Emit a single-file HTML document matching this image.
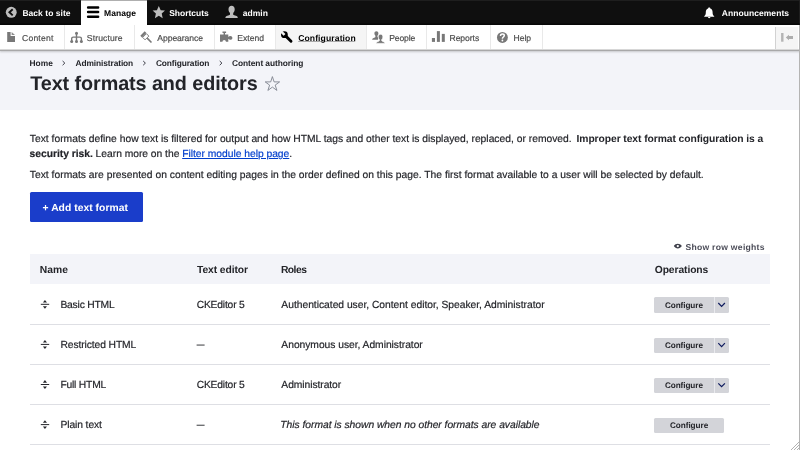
<!DOCTYPE html>
<html><head><meta charset="utf-8">
<style>
*{box-sizing:border-box;margin:0;padding:0}
html,body{width:800px;height:450px;overflow:hidden;background:#fff;font-family:"Liberation Sans",sans-serif;color:#232429;text-rendering:geometricPrecision}
body{position:relative;will-change:transform;transform:translateZ(0)}
.abs{position:absolute;white-space:nowrap;line-height:12px}
.sep{top:25px;width:1px;height:24px;background:#e9e9e9}
.row{left:30px;width:740px;height:1px;background:#dedfe4}
.cfg{background:#d3d4d9;border-radius:1.5px}
svg{position:absolute;overflow:visible}
</style></head><body>
<!-- toolbar bar -->
<div class="abs" style="left:0;top:0;width:800px;height:24.5px;background:#0f0f0f"></div>
<div class="abs" style="left:81px;top:0;width:66px;height:25px;background:#fff"></div>
<!-- tray -->
<div class="abs" style="left:0;top:25px;width:800px;height:25px;background:#fff;border-bottom:1px solid #dadada"></div>
<div class="abs" style="left:0;top:50px;width:800px;height:1px;background:#a8a8a9;box-shadow:0 1px 2px rgba(0,0,0,.27)"></div>
<div class="abs" style="left:275.5px;top:25px;width:91px;height:24px;background:#f5f5f5"></div>
<div class="abs sep" style="left:64px"></div>
<div class="abs sep" style="left:134px"></div>
<div class="abs sep" style="left:214px"></div>
<div class="abs sep" style="left:275px"></div>
<div class="abs sep" style="left:366px"></div>
<div class="abs sep" style="left:426px"></div>
<div class="abs sep" style="left:490px"></div>
<div class="abs sep" style="left:542px"></div>
<div class="abs" style="left:775px;top:26.5px;width:23px;height:22.5px;background:#f5f5f5;border-left:1px solid #d2d2d2"></div>
<!-- header -->
<div class="abs" style="left:0;top:50.5px;width:800px;height:59.9px;background:#f3f4f9;z-index:-1"></div>
<!-- button -->
<div class="abs" style="left:29.6px;top:192px;width:113px;height:29.6px;background:#1a3dca;border-radius:1.5px"></div>
<!-- table -->
<div class="abs" style="left:29.9px;top:254.2px;width:739.8px;height:29.8px;background:#f3f4f9"></div>
<div class="abs row" style="top:324px"></div>
<div class="abs row" style="top:364px"></div>
<div class="abs row" style="top:404px"></div>
<div class="abs row" style="top:444px"></div>
<div class="abs cfg" style="left:654.25px;top:297.4px;width:75px;height:15.3px"></div>
<div class="abs cfg" style="left:654.25px;top:337.55px;width:75px;height:15.3px"></div>
<div class="abs cfg" style="left:654.25px;top:377.7px;width:75px;height:15.3px"></div>
<div class="abs cfg" style="left:654.25px;top:417.8px;width:69.25px;height:15.3px"></div>
<div class="abs" style="left:714px;top:297.4px;width:1px;height:15.3px;background:#e9eaee"></div>
<div class="abs" style="left:714px;top:337.55px;width:1px;height:15.3px;background:#e9eaee"></div>
<div class="abs" style="left:714px;top:377.7px;width:1px;height:15.3px;background:#e9eaee"></div>
<!-- right edge -->
<div class="abs" style="left:799px;top:25px;width:1px;height:425px;background:#b4b4b4"></div>
<div class="abs" style="left:799px;top:0;width:1px;height:24.5px;background:#1e1e1e"></div>
<div class="abs" style="left:22.43px;top:7px;font-size:8.5px;font-weight:bold;color:#fff;letter-spacing:0.032px;">Back to site</div>
<div class="abs" style="left:104.03px;top:7px;font-size:8.5px;font-weight:bold;color:#000;letter-spacing:0.071px;">Manage</div>
<div class="abs" style="left:169.22px;top:7px;font-size:8.5px;font-weight:bold;color:#fff;letter-spacing:-0.019px;">Shortcuts</div>
<div class="abs" style="left:242.64px;top:7px;font-size:8.5px;font-weight:bold;color:#fff;letter-spacing:0.061px;">admin</div>
<div class="abs" style="left:721.78px;top:7px;font-size:8.5px;font-weight:bold;color:#fff;letter-spacing:0.054px;">Announcements</div>
<div class="abs" style="left:22.01px;top:32px;font-size:8.6px;font-weight:normal;color:#4d4d4d;letter-spacing:0.197px;-webkit-text-stroke:0.18px;">Content</div>
<div class="abs" style="left:86.87px;top:32px;font-size:8.6px;font-weight:normal;color:#4d4d4d;letter-spacing:0.107px;-webkit-text-stroke:0.18px;">Structure</div>
<div class="abs" style="left:157.34px;top:32px;font-size:8.6px;font-weight:normal;color:#4d4d4d;letter-spacing:-0.081px;-webkit-text-stroke:0.18px;">Appearance</div>
<div class="abs" style="left:237.29px;top:32px;font-size:8.6px;font-weight:normal;color:#4d4d4d;letter-spacing:-0.013px;-webkit-text-stroke:0.18px;">Extend</div>
<div class="abs" style="left:298.15px;top:32px;font-size:8.6px;font-weight:bold;color:#000;letter-spacing:0.103px;text-shadow:0 0 1.5px #fff,0 0 1px #fff;">Configuration</div>
<div class="abs" style="left:389.29px;top:32px;font-size:8.6px;font-weight:normal;color:#4d4d4d;letter-spacing:-0.158px;-webkit-text-stroke:0.18px;">People</div>
<div class="abs" style="left:449.49px;top:32px;font-size:8.6px;font-weight:normal;color:#4d4d4d;letter-spacing:-0.061px;-webkit-text-stroke:0.18px;">Reports</div>
<div class="abs" style="left:513.49px;top:32px;font-size:8.6px;font-weight:normal;color:#4d4d4d;letter-spacing:-0.031px;-webkit-text-stroke:0.18px;">Help</div>
<div class="abs" style="left:29.58px;top:57px;font-size:8.4px;font-weight:bold;color:#232429;letter-spacing:-0.013px;">Home</div>
<div class="abs" style="left:75.60px;top:57px;font-size:8.4px;font-weight:bold;color:#232429;letter-spacing:-0.113px;">Administration</div>
<div class="abs" style="left:155.91px;top:57px;font-size:8.4px;font-weight:bold;color:#232429;letter-spacing:-0.116px;">Configuration</div>
<div class="abs" style="left:231.96px;top:57px;font-size:8.4px;font-weight:bold;color:#232429;letter-spacing:-0.068px;">Content authoring</div>
<div class="abs" style="left:30.21px;top:78px;font-size:19.8px;font-weight:bold;color:#232429;letter-spacing:-0.079px;">Text formats and editors</div>
<div class="abs" style="left:29.81px;top:134px;font-size:10.3px;font-weight:normal;color:#232429;letter-spacing:0.002px;-webkit-text-stroke:0.18px;">Text formats define how text is filtered for output and how HTML tags and other text is displayed, replaced, or removed.</div>
<div class="abs" style="left:576.51px;top:134px;font-size:10.3px;font-weight:bold;color:#232429;letter-spacing:-0.070px;">Improper text format configuration is a</div>
<div class="abs" style="left:29.58px;top:149px;font-size:10.3px;font-weight:normal;color:#232429;letter-spacing:-0.024px;-webkit-text-stroke:0.18px;"><b>security risk.</b> Learn more on the <span style="color:#003ecc;text-decoration:underline;text-decoration-thickness:0.7px;text-underline-offset:1px">Filter module help page</span>.</div>
<div class="abs" style="left:29.81px;top:170px;font-size:10.3px;font-weight:normal;color:#232429;letter-spacing:0.010px;-webkit-text-stroke:0.18px;">Text formats are presented on content editing pages in the order defined on this page. The first format available to a user will be selected by default.</div>
<div class="abs" style="left:42.55px;top:203px;font-size:10.3px;font-weight:bold;color:#fff;letter-spacing:0.047px;">+ Add text format</div>
<div class="abs" style="left:685.40px;top:241px;font-size:8.6px;font-weight:bold;color:#4b4c58;letter-spacing:0.279px;">Show row weights</div>
<div class="abs" style="left:39.81px;top:265px;font-size:10.3px;font-weight:bold;color:#232429;letter-spacing:0.064px;">Name</div>
<div class="abs" style="left:197.07px;top:265px;font-size:10.3px;font-weight:bold;color:#232429;letter-spacing:-0.101px;">Text editor</div>
<div class="abs" style="left:280.91px;top:265px;font-size:10.3px;font-weight:bold;color:#232429;letter-spacing:-0.511px;">Roles</div>
<div class="abs" style="left:654.73px;top:265px;font-size:10.3px;font-weight:bold;color:#232429;letter-spacing:-0.086px;">Operations</div>
<div class="abs" style="left:60.41px;top:300px;font-size:10.3px;font-weight:normal;color:#232429;letter-spacing:-0.199px;-webkit-text-stroke:0.18px;">Basic HTML</div>
<div class="abs" style="left:60.41px;top:340px;font-size:10.3px;font-weight:normal;color:#232429;letter-spacing:-0.096px;-webkit-text-stroke:0.18px;">Restricted HTML</div>
<div class="abs" style="left:60.41px;top:380px;font-size:10.3px;font-weight:normal;color:#232429;letter-spacing:-0.201px;-webkit-text-stroke:0.18px;">Full HTML</div>
<div class="abs" style="left:60.41px;top:420px;font-size:10.3px;font-weight:normal;color:#232429;letter-spacing:-0.091px;-webkit-text-stroke:0.18px;">Plain text</div>
<div class="abs" style="left:196.65px;top:300px;font-size:10.3px;font-weight:normal;color:#232429;letter-spacing:-0.184px;-webkit-text-stroke:0.18px;">CKEditor 5</div>
<div class="abs" style="left:196.65px;top:380px;font-size:10.3px;font-weight:normal;color:#232429;letter-spacing:-0.184px;-webkit-text-stroke:0.18px;">CKEditor 5</div>
<div class="abs" style="left:281.36px;top:300px;font-size:10.3px;font-weight:normal;color:#232429;letter-spacing:-0.021px;-webkit-text-stroke:0.18px;">Authenticated user, Content editor, Speaker, Administrator</div>
<div class="abs" style="left:281.36px;top:340px;font-size:10.3px;font-weight:normal;color:#232429;letter-spacing:-0.039px;-webkit-text-stroke:0.18px;">Anonymous user, Administrator</div>
<div class="abs" style="left:281.36px;top:380px;font-size:10.3px;font-weight:normal;color:#232429;letter-spacing:-0.069px;-webkit-text-stroke:0.18px;">Administrator</div>
<div class="abs" style="left:280.32px;top:420px;font-size:10.3px;font-weight:normal;color:#232429;letter-spacing:-0.032px;font-style:italic;-webkit-text-stroke:0.18px;">This format is shown when no other formats are available</div>
<div class="abs" style="left:664.96px;top:300px;font-size:8.2px;font-weight:bold;color:#232429;letter-spacing:-0.084px;">Configure</div>
<div class="abs" style="left:664.96px;top:340px;font-size:8.2px;font-weight:bold;color:#232429;letter-spacing:-0.084px;">Configure</div>
<div class="abs" style="left:664.96px;top:380px;font-size:8.2px;font-weight:bold;color:#232429;letter-spacing:-0.084px;">Configure</div>
<div class="abs" style="left:669.91px;top:420px;font-size:8.2px;font-weight:bold;color:#232429;letter-spacing:-0.041px;">Configure</div>
<svg width="800" height="450" viewBox="0 0 800 450" style="left:0;top:0">
<!-- top 1px lighter strip -->
<rect x="0" y="0" width="800" height="0.8" fill="#222"/>
<rect x="81" y="0" width="66" height="0.8" fill="#c8c8c8"/>
<rect x="0" y="23.7" width="81" height="0.8" fill="#000"/>
<rect x="147" y="23.7" width="653" height="0.8" fill="#000"/>
<!-- back to site -->
<circle cx="11.25" cy="12.3" r="5.45" fill="#bebebe"/>
<path d="M12.7 9.2 L9.4 12.3 L12.7 15.4" fill="none" stroke="#0f0f0f" stroke-width="1.9" stroke-linejoin="miter"/>
<!-- hamburger -->
<g stroke="#000" stroke-width="2.5" stroke-linecap="round"><path d="M88.1 7.4H98.1M88.1 12.1H98.1M88.1 16.8H98.1"/></g>
<!-- star -->
<path id="st" fill="#bebebe" d="M158.8 5.9 L160.7 10.3 L165.0 10.6 L161.7 13.6 L162.7 18.2 L158.8 15.8 L154.9 18.2 L155.9 13.6 L152.6 10.6 L156.9 10.3 Z"/>
<!-- user -->
<path fill="#bebebe" d="M231.6 5.8 C233.5 5.8 234.7 7.3 234.7 9.3 C234.7 11 234 12.3 233.2 13 L233.2 14.2 C233.2 14.8 233.6 15 234.3 15.2 L236.6 16 C237.4 16.3 237.7 16.9 237.7 17.6 V18.1 H225.4 V17.6 C225.4 16.9 225.8 16.3 226.6 16 L228.9 15.2 C229.6 15 230 14.8 230 14.2 L230 13 C229.2 12.3 228.5 11 228.5 9.3 C228.5 7.3 229.7 5.8 231.6 5.8 Z"/>
<!-- bell -->
<path fill="#fff" d="M709.2 7.5 C710 7.5 710.3 8 710.3 8.6 C712 9.2 712.6 10.7 712.6 12.4 C712.6 14.2 713 15.2 714.2 16.2 V16.7 H704.2 V16.2 C705.4 15.2 705.8 14.2 705.8 12.4 C705.8 10.7 706.4 9.2 708.1 8.6 C708.1 8 708.4 7.5 709.2 7.5 Z M708 17.1 H710.4 C710.4 17.8 709.9 18.2 709.2 18.2 C708.5 18.2 708 17.8 708 17.1 Z"/>
<!-- content -->
<path fill="#787878" d="M7.2 31.9 H10.6 V36 H15 V41.9 H7.2 Z"/>
<path fill="#8c8c8c" d="M11.6 32.1 L15 35.1 H11.6 Z"/>
<!-- structure -->
<g fill="#787878" stroke="none"><circle cx="76.5" cy="33.2" r="1.5"/><circle cx="71.7" cy="41.5" r="1.5"/><circle cx="76.5" cy="41.5" r="1.5"/><circle cx="81.4" cy="41.5" r="1.5"/></g>
<path fill="none" stroke="#787878" stroke-width="1.4" d="M76.5 33.2 V41.5 M71.7 41.5 V38.6 Q71.7 37.1 73.2 37.1 H79.9 Q81.4 37.1 81.4 38.6 V41.5"/>
<!-- appearance -->
<g transform="translate(142.5,33.5) rotate(45)"><rect x="0" y="-3.1" width="2.4" height="6.2" fill="#787878"/><rect x="2.9" y="-2.65" width="3.4" height="5.3" fill="#fff" stroke="#787878" stroke-width="0.9"/><path d="M6.6 0 H12.7" stroke="#787878" stroke-width="1.6"/></g>
<!-- extend -->
<path fill="#787878" d="M220 34.4 H223.6 V33 H222.5 V31.4 H226.1 V33 H225 V34.4 H228.3 V37 C228.8 36.4 229.5 36 230.4 36 C231.5 36 232.4 36.8 232.4 37.9 C232.4 39 231.5 39.8 230.4 39.8 C229.5 39.8 228.8 39.4 228.3 38.8 V41.8 H225.9 C225.9 40.6 225.2 39.9 224.2 39.9 C223.2 39.9 222.5 40.6 222.5 41.8 H220 Z"/>
<!-- wrench -->
<path d="M285.6 35.9 L291 41.2" stroke="#000" stroke-width="2.9" stroke-linecap="round"/>
<circle cx="284.4" cy="34.7" r="3.4" fill="#000"/>
<g transform="translate(284.4,34.7) rotate(-135)"><rect x="-0.2" y="-1.25" width="5" height="2.5" fill="#f5f5f5"/></g>
<rect x="298.2" y="41.15" width="57" height="0.65" fill="#000" opacity="0.48"/>
<!-- people -->
<path fill="#787878" d="M376.4 31.3 C377.6 31.3 378.4 32.2 378.4 33.4 C378.4 34.4 378 35.2 377.4 35.7 V36.6 L378 37 V39.8 H372.2 V39.4 C372.2 38.8 372.5 38.5 373.1 38.2 L374.8 37.5 C375.2 37.3 375.4 37.1 375.4 36.7 V35.7 C374.8 35.2 374.4 34.4 374.4 33.4 C374.4 32.2 375.2 31.3 376.4 31.3 Z"/>
<path fill="#787878" stroke="#fff" stroke-width="0.7" d="M380.6 34.3 C382 34.3 382.9 35.4 382.9 36.9 C382.9 38.1 382.4 39 381.7 39.6 V40.5 C381.7 40.9 382 41.1 382.5 41.3 L384 41.9 C384.5 42.1 384.8 42.5 384.8 43 V43.4 H376.2 V43 C376.2 42.5 376.5 42.1 377 41.9 L378.6 41.3 C379.1 41.1 379.4 40.9 379.4 40.5 V39.6 C378.7 39 378.2 38.1 378.2 36.9 C378.2 35.4 379.2 34.3 380.6 34.3 Z"/>
<!-- reports -->
<g fill="#787878"><rect x="431.9" y="38" width="3.1" height="3.9"/><rect x="436.9" y="31.1" width="3" height="10.8"/><rect x="441.8" y="33.9" width="3" height="8"/></g>
<!-- help -->
<circle cx="502.4" cy="37.45" r="5.45" fill="#787878"/>
<path fill="none" stroke="#fff" stroke-width="1.5" d="M500.5 36 C500.5 34.6 501.3 34 502.4 34 C503.5 34 504.3 34.6 504.3 35.6 C504.3 37 502.4 37 502.4 38.7"/>
<circle cx="502.4" cy="40.5" r="0.9" fill="#fff"/>
<!-- tray toggle -->
<rect x="781.1" y="33" width="2.4" height="8.7" fill="#b4b4b4"/>
<path fill="#adadad" d="M785.8 37.5 L789 34.8 V36.1 H793 V38.9 H789 V40.2 Z"/>
<!-- title star -->
<path fill="none" stroke="#7f838e" stroke-width="0.9" stroke-linejoin="miter" d="M272.4 76.6 L274.1 81.9 L279.6 81.9 L275.2 85.1 L276.9 90.4 L272.4 87.1 L267.9 90.4 L269.6 85.1 L265.2 81.9 L270.7 81.9 Z"/>
<!-- breadcrumb chevrons -->
<g fill="none" stroke="#3c3d47" stroke-width="1"><path d="M62.6 61 L64.8 63.1 L62.6 65.2"/><path d="M143.2 61 L145.4 63.1 L143.2 65.2"/><path d="M219.7 61 L221.9 63.1 L219.7 65.2"/></g>
<!-- eye -->
<path fill="#3f404b" d="M673.8 246.1 C674.8 244.6 676.2 243.8 677.8 243.8 C679.4 243.8 680.8 244.6 681.8 246.1 C680.8 247.6 679.4 248.4 677.8 248.4 C676.2 248.4 674.8 247.6 673.8 246.1 Z"/>
<circle cx="677.8" cy="246.1" r="1.15" fill="#fff"/>
<!-- drag handles + chevrons -->
<g fill="#232429" transform="translate(0,0)"><rect x="40.8" y="303.8" width="8.4" height="1"/><path d="M44.95 299.9 L47 302.5 H42.9 Z"/><path d="M44.95 308.8 L47 306.3 H42.9 Z"/></g>
<g fill="#232429" transform="translate(0,40.1)"><rect x="40.8" y="303.8" width="8.4" height="1"/><path d="M44.95 299.9 L47 302.5 H42.9 Z"/><path d="M44.95 308.8 L47 306.3 H42.9 Z"/></g>
<g fill="#232429" transform="translate(0,80.2)"><rect x="40.8" y="303.8" width="8.4" height="1"/><path d="M44.95 299.9 L47 302.5 H42.9 Z"/><path d="M44.95 308.8 L47 306.3 H42.9 Z"/></g>
<g fill="#232429" transform="translate(0,120.3)"><rect x="40.8" y="303.8" width="8.4" height="1"/><path d="M44.95 299.9 L47 302.5 H42.9 Z"/><path d="M44.95 308.8 L47 306.3 H42.9 Z"/></g>
<path fill="none" stroke="#0d1a5e" stroke-width="1.2" transform="translate(0,0)" d="M718.3 303 L721.6 306.4 L724.9 303"/>
<path fill="none" stroke="#0d1a5e" stroke-width="1.2" transform="translate(0,40.15)" d="M718.3 303 L721.6 306.4 L724.9 303"/>
<path fill="none" stroke="#0d1a5e" stroke-width="1.2" transform="translate(0,80.3)" d="M718.3 303 L721.6 306.4 L724.9 303"/>

<g fill="#232429"><rect x="196.6" y="344.6" width="8" height="0.9"/><rect x="196.6" y="424.75" width="8" height="0.9"/></g>
<!-- resize grip -->
<g stroke="#a8a8a8" stroke-width="0.9"><path d="M790.5 450.5 L799.5 441.5 M793.5 450.5 L799.5 444.5 M796.5 450.5 L799.5 447.5"/></g>
</svg>

</body></html>
